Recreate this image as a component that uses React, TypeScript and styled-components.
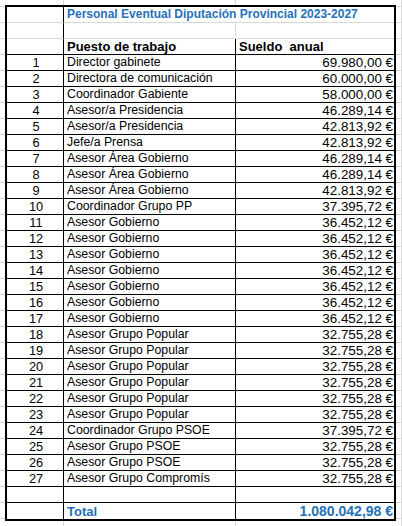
import React from 'react';
import styled, { createGlobalStyle } from 'styled-components';

const GlobalStyle = createGlobalStyle`
  * { box-sizing: border-box; }
  body {
    margin: 0;
    background: #fff;
    font-family: 'Liberation Sans', Arial, sans-serif;
  }
`;

const grid = '#d9d9d9';
const blue = '#2571b8';

const rows: [string, string][] = [
  ['Director gabinete', '69.980,00 €'],
  ['Directora de comunicación', '60.000,00 €'],
  ['Coordinador Gabiente', '58.000,00 €'],
  ['Asesor/a Presidencia', '46.289,14 €'],
  ['Asesor/a Presidencia', '42.813,92 €'],
  ['Jefe/a Prensa', '42.813,92 €'],
  ['Asesor Área Gobierno', '46.289,14 €'],
  ['Asesor Área Gobierno', '46.289,14 €'],
  ['Asesor Área Gobierno', '42.813,92 €'],
  ['Coordinador Grupo PP', '37.395,72 €'],
  ['Asesor Gobierno', '36.452,12 €'],
  ['Asesor Gobierno', '36.452,12 €'],
  ['Asesor Gobierno', '36.452,12 €'],
  ['Asesor Gobierno', '36.452,12 €'],
  ['Asesor Gobierno', '36.452,12 €'],
  ['Asesor Gobierno', '36.452,12 €'],
  ['Asesor Gobierno', '36.452,12 €'],
  ['Asesor Grupo Popular', '32.755,28 €'],
  ['Asesor Grupo Popular', '32.755,28 €'],
  ['Asesor Grupo Popular', '32.755,28 €'],
  ['Asesor Grupo Popular', '32.755,28 €'],
  ['Asesor Grupo Popular', '32.755,28 €'],
  ['Asesor Grupo Popular', '32.755,28 €'],
  ['Coordinador Grupo PSOE', '37.395,72 €'],
  ['Asesor Grupo PSOE', '32.755,28 €'],
  ['Asesor Grupo PSOE', '32.755,28 €'],
  ['Asesor Grupo Compromís', '32.755,28 €'],
];

const Sheet = styled.div`
  width: 402px;
  height: 526px;
  overflow: hidden;
  padding: 5px 0 0 5px;
  background-color: #fff;
  background-image:
    linear-gradient(${grid}, ${grid}),
    linear-gradient(${grid}, ${grid}),
    linear-gradient(${grid}, ${grid}),
    linear-gradient(to bottom, ${grid} 0 1px, transparent 1px);
  background-size: 1px 100%, 1px 100%, 1px 100%, 100% 16px;
  background-position: 63px 0, 235px 0, 401px 0, 0 6px;
  background-repeat: no-repeat, no-repeat, no-repeat, repeat;
`;

const Table = styled.table`
  width: 391px;
  table-layout: fixed;
  border-collapse: separate;
  border-spacing: 0;
  border: 2px solid #000;
  background: #fff;
  color: #000;
`;

const Row = styled.tr<{ $soft?: boolean; $last?: boolean }>`
  td {
    border-bottom-color: ${p => (p.$soft ? grid : '#000')};
    ${p => p.$last && 'border-bottom: 0;'}
  }
  td:nth-child(2) {
    border-right-color: ${p => (p.$soft ? grid : '#000')};
  }
`;

const Cell = styled.td<{ $bold?: boolean; $blue?: boolean }>`
  height: 16px;
  padding: 0 1px 0 3px;
  line-height: 15px;
  border-right: 1px solid #000;
  border-bottom: 1px solid #000;
  text-align: left;
  font-weight: ${p => (p.$bold ? 700 : 400)};
  font-size: ${p => (p.$bold ? '13px' : '12.3px')};
  color: ${p => (p.$blue ? blue : '#000')};
  white-space: nowrap;
  overflow: visible;
  &:last-child {
    border-right: 0;
  }
`;

const Amount = styled(Cell)`
  font-size: ${p => (p.$bold ? '14px' : '13.4px')};
  text-align: right;
`;

const Index = styled(Cell)`
  text-align: center;
  font-size: 12.8px;
`;

const Title = styled(Cell)`
  font-size: 12px;
`;

export default function App() {
  return (
    <>
      <GlobalStyle />
      <Sheet>
        <Table>
          <colgroup>
            <col style={{ width: 57 }} />
            <col style={{ width: 172 }} />
            <col style={{ width: 158 }} />
          </colgroup>
          <tbody>
            <Row $soft>
              <Cell />
              <Title colSpan={2} $bold $blue>
                Personal Eventual Diputación Provincial 2023-2027
              </Title>
            </Row>
            <Row $soft>
              <Cell />
              <Cell />
              <Cell />
            </Row>
            <Row>
              <Cell />
              <Cell $bold>Puesto de trabajo</Cell>
              <Cell $bold>Sueldo&nbsp; anual</Cell>
            </Row>
            {rows.map(([job, pay], i) => (
              <Row key={i}>
                <Index>{i + 1}</Index>
                <Cell>{job}</Cell>
                <Amount>{pay}</Amount>
              </Row>
            ))}
            <Row>
              <Cell />
              <Cell />
              <Cell />
            </Row>
            <Row $last>
              <Cell />
              <Cell $bold $blue>Total</Cell>
              <Amount $bold $blue>1.080.042,98 €</Amount>
            </Row>
          </tbody>
        </Table>
      </Sheet>
    </>
  );
}
